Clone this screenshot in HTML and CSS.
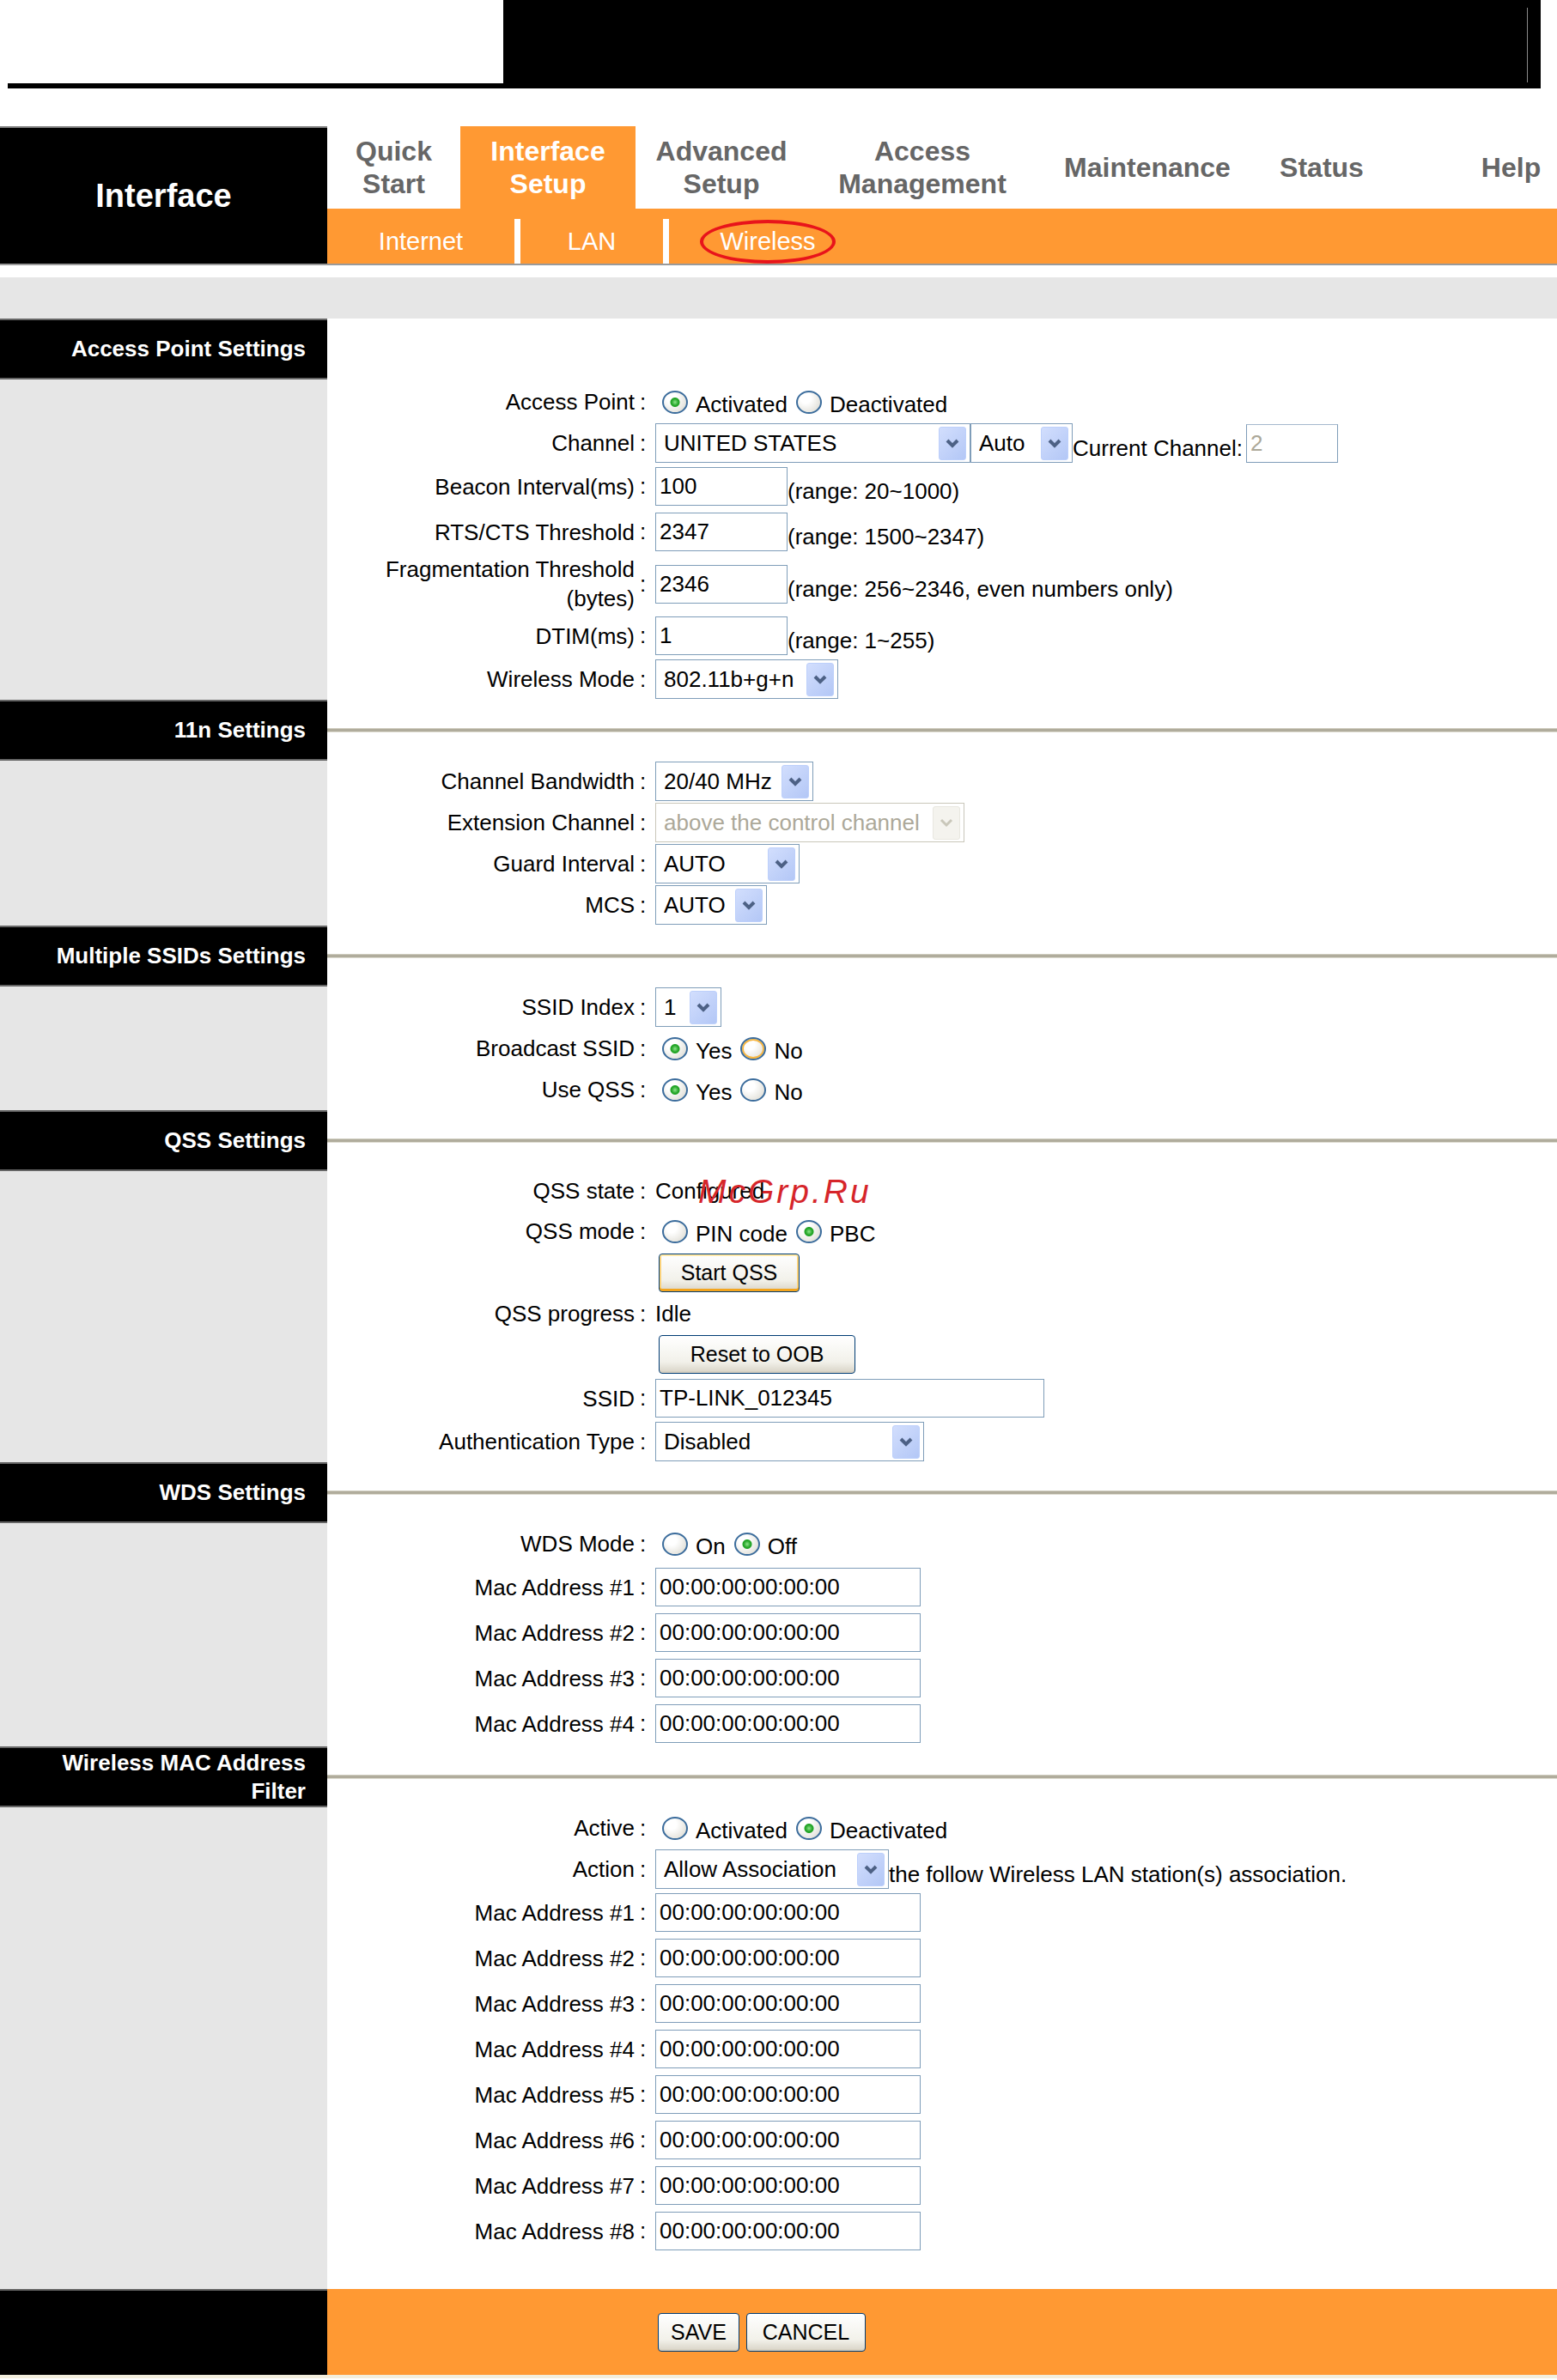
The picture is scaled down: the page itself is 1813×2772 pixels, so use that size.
FILE: index.html
```html
<!DOCTYPE html>
<html lang="en">
<head>
  <meta charset="UTF-8" />
  <title>Interface Setup - Wireless</title>
  <link rel="stylesheet" href="styles.css">
</head>
<body>
  <div class="topbar">
    <div class="topbar-left"></div>
    <div class="topbar-right"><div class="topbar-edge"></div></div>
  </div>

  <div class="nav">
    <div class="nav-title">Interface</div>
    <div class="nav-main">
      <div class="tabs">
        <div class="tab t-quick">Quick<br>Start</div>
        <div class="tab t-iface active">Interface<br>Setup</div>
        <div class="tab t-adv">Advanced<br>Setup</div>
        <div class="tab t-access">Access<br>Management</div>
        <div class="tab t-maint">Maintenance</div>
        <div class="tab t-status">Status</div>
        <div class="tab-fill"></div>
        <div class="tab t-help">Help</div>
      </div>
      <div class="subnav">
        <div class="sub s-internet">Internet</div>
        <div class="sub s-lan">LAN</div>
        <div class="sub s-wireless"><span class="circled">Wireless</span></div>
      </div>
    </div>
  </div>

  <div class="band"></div>

  <!-- Access Point Settings -->
  <div class="sec-head">
    <div class="sec-title">Access Point Settings</div>
    <div class="sec-rule none"></div>
  </div>
  <div class="sec-body">
    <div class="side"></div>
    <div class="fields first">
      <div class="row r-radio">
        <div class="label">Access Point</div><div class="colon">:</div>
        <div class="value">
          <input type="radio" name="ap" checked><span class="opt">Activated</span>
          <input type="radio" name="ap"><span class="opt">Deactivated</span>
        </div>
      </div>
      <div class="row">
        <div class="label">Channel</div><div class="colon">:</div>
        <div class="value">
          <div class="select w367"><span>UNITED STATES</span><i class="arrow"><svg width="16" height="11" viewBox="0 0 16 11"><polyline points="2,2 8,8 14,2" fill="none" stroke="#4d6185" stroke-width="4"/></svg></i></div>
          <div class="select w119"><span>Auto</span><i class="arrow"><svg width="16" height="11" viewBox="0 0 16 11"><polyline points="2,2 8,8 14,2" fill="none" stroke="#4d6185" stroke-width="4"/></svg></i></div>
          <span class="hint">Current Channel:</span>
          <input class="text w107 off" type="text" value="2" disabled>
        </div>
      </div>
      <div class="row">
        <div class="label">Beacon Interval(ms)</div><div class="colon">:</div>
        <div class="value"><input class="text w154" type="text" value="100"><span class="hint">(range: 20~1000)</span></div>
      </div>
      <div class="row">
        <div class="label">RTS/CTS Threshold</div><div class="colon">:</div>
        <div class="value"><input class="text w154" type="text" value="2347"><span class="hint">(range: 1500~2347)</span></div>
      </div>
      <div class="row">
        <div class="label">Fragmentation Threshold (bytes)</div><div class="colon">:</div>
        <div class="value"><input class="text w154" type="text" value="2346"><span class="hint">(range: 256~2346, even numbers only)</span></div>
      </div>
      <div class="row">
        <div class="label">DTIM(ms)</div><div class="colon">:</div>
        <div class="value"><input class="text w154" type="text" value="1"><span class="hint">(range: 1~255)</span></div>
      </div>
      <div class="row">
        <div class="label">Wireless Mode</div><div class="colon">:</div>
        <div class="value">
          <div class="select w213"><span>802.11b+g+n</span><i class="arrow"><svg width="16" height="11" viewBox="0 0 16 11"><polyline points="2,2 8,8 14,2" fill="none" stroke="#4d6185" stroke-width="4"/></svg></i></div>
        </div>
      </div>
    </div>
  </div>

  <!-- 11n Settings -->
  <div class="sec-head">
    <div class="sec-title">11n Settings</div>
    <div class="sec-rule"><div class="rule"></div></div>
  </div>
  <div class="sec-body">
    <div class="side"></div>
    <div class="fields">
      <div class="row">
        <div class="label">Channel Bandwidth</div><div class="colon">:</div>
        <div class="value"><div class="select w184"><span>20/40 MHz</span><i class="arrow"><svg width="16" height="11" viewBox="0 0 16 11"><polyline points="2,2 8,8 14,2" fill="none" stroke="#4d6185" stroke-width="4"/></svg></i></div></div>
      </div>
      <div class="row">
        <div class="label">Extension Channel</div><div class="colon">:</div>
        <div class="value"><div class="select w360 disabled"><span>above the control channel</span><i class="arrow"><svg width="16" height="11" viewBox="0 0 16 11"><polyline points="2,2 8,8 14,2" fill="none" stroke="#c9c7ba" stroke-width="3"/></svg></i></div></div>
      </div>
      <div class="row">
        <div class="label">Guard Interval</div><div class="colon">:</div>
        <div class="value"><div class="select w168"><span>AUTO</span><i class="arrow"><svg width="16" height="11" viewBox="0 0 16 11"><polyline points="2,2 8,8 14,2" fill="none" stroke="#4d6185" stroke-width="4"/></svg></i></div></div>
      </div>
      <div class="row">
        <div class="label">MCS</div><div class="colon">:</div>
        <div class="value"><div class="select w130"><span>AUTO</span><i class="arrow"><svg width="16" height="11" viewBox="0 0 16 11"><polyline points="2,2 8,8 14,2" fill="none" stroke="#4d6185" stroke-width="4"/></svg></i></div></div>
      </div>
    </div>
  </div>

  <!-- Multiple SSIDs Settings -->
  <div class="sec-head">
    <div class="sec-title">Multiple SSIDs Settings</div>
    <div class="sec-rule"><div class="rule"></div></div>
  </div>
  <div class="sec-body">
    <div class="side"></div>
    <div class="fields">
      <div class="row">
        <div class="label">SSID Index</div><div class="colon">:</div>
        <div class="value"><div class="select w77"><span>1</span><i class="arrow"><svg width="16" height="11" viewBox="0 0 16 11"><polyline points="2,2 8,8 14,2" fill="none" stroke="#4d6185" stroke-width="4"/></svg></i></div></div>
      </div>
      <div class="row r-radio">
        <div class="label">Broadcast SSID</div><div class="colon">:</div>
        <div class="value">
          <input type="radio" name="bc" checked><span class="opt">Yes</span>
          <input type="radio" name="bc" class="hot"><span class="opt">No</span>
        </div>
      </div>
      <div class="row r-radio">
        <div class="label">Use QSS</div><div class="colon">:</div>
        <div class="value">
          <input type="radio" name="uq" checked><span class="opt">Yes</span>
          <input type="radio" name="uq"><span class="opt">No</span>
        </div>
      </div>
    </div>
  </div>

  <!-- QSS Settings -->
  <div class="sec-head">
    <div class="sec-title">QSS Settings</div>
    <div class="sec-rule"><div class="rule"></div></div>
  </div>
  <div class="sec-body">
    <div class="side"></div>
    <div class="fields">
      <div class="row r-text">
        <div class="label">QSS state</div><div class="colon">:</div>
        <div class="value mark-host">Configured<span class="watermark">McGrp.Ru</span></div>
      </div>
      <div class="row r-radio">
        <div class="label">QSS mode</div><div class="colon">:</div>
        <div class="value">
          <input type="radio" name="qm"><span class="opt">PIN code</span>
          <input type="radio" name="qm" checked><span class="opt">PBC</span>
        </div>
      </div>
      <div class="row">
        <div class="label"></div><div class="colon"></div>
        <div class="value"><button class="btn w164 focus">Start QSS</button></div>
      </div>
      <div class="row r-text">
        <div class="label">QSS progress</div><div class="colon">:</div>
        <div class="value">Idle</div>
      </div>
      <div class="row">
        <div class="label"></div><div class="colon"></div>
        <div class="value"><button class="btn w229">Reset to OOB</button></div>
      </div>
      <div class="row">
        <div class="label">SSID</div><div class="colon">:</div>
        <div class="value"><input class="text w453" type="text" value="TP-LINK_012345"></div>
      </div>
      <div class="row">
        <div class="label">Authentication Type</div><div class="colon">:</div>
        <div class="value"><div class="select w313"><span>Disabled</span><i class="arrow"><svg width="16" height="11" viewBox="0 0 16 11"><polyline points="2,2 8,8 14,2" fill="none" stroke="#4d6185" stroke-width="4"/></svg></i></div></div>
      </div>
    </div>
  </div>

  <!-- WDS Settings -->
  <div class="sec-head">
    <div class="sec-title">WDS Settings</div>
    <div class="sec-rule"><div class="rule"></div></div>
  </div>
  <div class="sec-body">
    <div class="side"></div>
    <div class="fields">
      <div class="row r-radio">
        <div class="label">WDS Mode</div><div class="colon">:</div>
        <div class="value">
          <input type="radio" name="wds"><span class="opt">On</span>
          <input type="radio" name="wds" checked><span class="opt">Off</span>
        </div>
      </div>
      <div class="row"><div class="label">Mac Address #1</div><div class="colon">:</div><div class="value"><input class="text w309" type="text" value="00:00:00:00:00:00"></div></div>
      <div class="row"><div class="label">Mac Address #2</div><div class="colon">:</div><div class="value"><input class="text w309" type="text" value="00:00:00:00:00:00"></div></div>
      <div class="row"><div class="label">Mac Address #3</div><div class="colon">:</div><div class="value"><input class="text w309" type="text" value="00:00:00:00:00:00"></div></div>
      <div class="row"><div class="label">Mac Address #4</div><div class="colon">:</div><div class="value"><input class="text w309" type="text" value="00:00:00:00:00:00"></div></div>
    </div>
  </div>

  <!-- Wireless MAC Address Filter -->
  <div class="sec-head">
    <div class="sec-title">Wireless MAC Address Filter</div>
    <div class="sec-rule"><div class="rule"></div></div>
  </div>
  <div class="sec-body">
    <div class="side"></div>
    <div class="fields last">
      <div class="row r-radio">
        <div class="label">Active</div><div class="colon">:</div>
        <div class="value">
          <input type="radio" name="mf"><span class="opt">Activated</span>
          <input type="radio" name="mf" checked><span class="opt">Deactivated</span>
        </div>
      </div>
      <div class="row">
        <div class="label">Action</div><div class="colon">:</div>
        <div class="value">
          <div class="select w272"><span>Allow Association</span><i class="arrow"><svg width="16" height="11" viewBox="0 0 16 11"><polyline points="2,2 8,8 14,2" fill="none" stroke="#4d6185" stroke-width="4"/></svg></i></div>
          <span class="hint">the follow Wireless LAN station(s) association.</span>
        </div>
      </div>
      <div class="row"><div class="label">Mac Address #1</div><div class="colon">:</div><div class="value"><input class="text w309" type="text" value="00:00:00:00:00:00"></div></div>
      <div class="row"><div class="label">Mac Address #2</div><div class="colon">:</div><div class="value"><input class="text w309" type="text" value="00:00:00:00:00:00"></div></div>
      <div class="row"><div class="label">Mac Address #3</div><div class="colon">:</div><div class="value"><input class="text w309" type="text" value="00:00:00:00:00:00"></div></div>
      <div class="row"><div class="label">Mac Address #4</div><div class="colon">:</div><div class="value"><input class="text w309" type="text" value="00:00:00:00:00:00"></div></div>
      <div class="row"><div class="label">Mac Address #5</div><div class="colon">:</div><div class="value"><input class="text w309" type="text" value="00:00:00:00:00:00"></div></div>
      <div class="row"><div class="label">Mac Address #6</div><div class="colon">:</div><div class="value"><input class="text w309" type="text" value="00:00:00:00:00:00"></div></div>
      <div class="row"><div class="label">Mac Address #7</div><div class="colon">:</div><div class="value"><input class="text w309" type="text" value="00:00:00:00:00:00"></div></div>
      <div class="row"><div class="label">Mac Address #8</div><div class="colon">:</div><div class="value"><input class="text w309" type="text" value="00:00:00:00:00:00"></div></div>
    </div>
  </div>

  <div class="footer">
    <div class="footer-side"></div>
    <div class="footer-main">
      <button class="btn w95">SAVE</button>
      <button class="btn w139">CANCEL</button>
    </div>
  </div>
  <div class="footer-edge"></div>
</body>
</html>
```

FILE: styles.css
```css
body {
  margin: 0;
  width: 1813px;
  background: #fff;
  color: #000;
  font-family: "Liberation Sans", Arial, sans-serif;
  font-size: 26px;
}

/* top strip */
.topbar {
  display: flex;
  height: 103px;
}

.topbar-left {
  width: 577px;
  margin-left: 9px;
  border-bottom: 6px solid #000;
  box-sizing: border-box;
}

.topbar-right {
  width: 1208px;
  background: #000;
  padding: 9px 15px 7px 0;
  box-sizing: border-box;
}

.topbar-edge {
  height: 100%;
  border-right: 1px solid #8a8a8a;
}

/* main menu */
.nav {
  display: flex;
  margin-top: 44px;
  border-bottom: 2px solid #9a9a9a;
}

.nav-title {
  width: 381px;
  box-sizing: border-box;
  background: #000;
  color: #fff;
  font-weight: bold;
  font-size: 38px;
  display: flex;
  align-items: center;
  justify-content: center;
  border-top: 2px solid #808080;
}

.nav-main {
  flex: 1;
  display: flex;
  flex-direction: column;
}

.tabs {
  height: 96px;
  display: flex;
}

.tab {
  display: flex;
  align-items: center;
  justify-content: center;
  text-align: center;
  font-weight: bold;
  font-size: 32px;
  line-height: 38px;
  color: #666;
}

.tab.active {
  background: #ff9933;
  color: #fff;
}

.t-quick { width: 155px; }
.t-iface { width: 204px; }
.t-adv { width: 200px; }
.t-access { width: 268px; }
.t-maint { width: 256px; }
.t-status { width: 150px; }
.tab-fill { flex: 1; }
.t-help { width: 107px; }

.subnav {
  height: 64px;
  background: #ff9933;
  display: flex;
  align-items: flex-end;
}

.sub {
  height: 52px;
  display: flex;
  align-items: center;
  justify-content: center;
  color: #fff;
  font-size: 29px;
  box-sizing: border-box;
}

.s-internet { width: 218px; }
.s-lan { width: 173px; border-left: 7px solid #fff; }
.s-wireless { width: 237px; border-left: 7px solid #fff; }

.circled {
  position: relative;
  line-height: 33px;
}

.circled::after {
  content: "";
  position: absolute;
  left: -23px;
  right: -23px;
  top: -9px;
  bottom: -9px;
  border: 4px solid #e8141b;
  border-radius: 50%;
}

.band {
  height: 48px;
  margin-top: 14px;
  background: #e6e6e6;
}

/* sections */
.sec-head {
  display: flex;
  height: 71px;
}

.sec-title {
  width: 381px;
  box-sizing: border-box;
  background: #000;
  color: #fff;
  font-weight: bold;
  font-size: 26px;
  line-height: 33px;
  text-align: right;
  padding: 0 25px 0 20px;
  display: flex;
  align-items: center;
  justify-content: flex-end;
  border-top: 2px solid #666;
  border-bottom: 2px solid #666;
}

.sec-rule {
  flex: 1;
  display: flex;
  align-items: center;
}

.rule {
  flex: 1;
  height: 3px;
  background: #b0ac9c;
  border-top: 1px solid #cfccbf;
  border-bottom: 1px solid #dddbd0;
}

.sec-body {
  display: flex;
}

.side {
  width: 381px;
  background: #e6e6e6;
}

.fields {
  flex: 1;
  padding-left: 59px;
}

.fields.first { padding-top: 2px; }
.fields.last { padding-bottom: 41px; }

.row {
  display: grid;
  grid-template-columns: 299px 24px 1fr;
  align-items: center;
}

.row.r-radio { height: 48px; }
.row.r-text { height: 46px; }

.label {
  text-align: right;
  line-height: 34px;
}

.colon {
  padding-left: 6px;
}

.value {
  display: flex;
  align-items: center;
  white-space: nowrap;
}

.hint {
  margin-top: 12px;
}

/* text boxes */
.text {
  height: 45px;
  box-sizing: border-box;
  margin: 4px 0;
  padding: 0 4px;
  border: 1px solid #7f9db9;
  font: inherit;
  color: #000;
  background: #fff;
}

.text.off {
  margin: 0 0 0 4px;
  color: #aca899;
  border-top-color: #a5b9cd;
}

.w107 { width: 107px; }
.w154 { width: 154px; }
.w309 { width: 309px; }
.w453 { width: 453px; }

/* drop downs */
.select {
  display: flex;
  align-items: center;
  height: 46px;
  margin: 1px 0;
  box-sizing: border-box;
  border: 1px solid #7f9db9;
  background: #fff;
  padding: 0 4px 0 9px;
}

.select span {
  flex: 1;
  overflow: hidden;
}

.arrow {
  width: 32px;
  height: 39px;
  box-sizing: border-box;
  border: 1px solid #bdd0fb;
  border-radius: 3px;
  background: linear-gradient(135deg, #d2defd, #b3c7f6);
  display: flex;
  align-items: center;
  justify-content: center;
}

.select.disabled {
  border-color: #c9c7ba;
  color: #aca899;
}

.select.disabled .arrow {
  border-color: #e8e7e0;
  background: #f4f3ee;
}

.w77 { width: 77px; }
.w119 { width: 119px; }
.w130 { width: 130px; }
.w168 { width: 168px; }
.w184 { width: 184px; }
.w213 { width: 213px; }
.w272 { width: 272px; }
.w313 { width: 313px; }
.w360 { width: 360px; }
.w367 { width: 367px; }

/* radio buttons */
input[type="radio"] {
  appearance: none;
  -webkit-appearance: none;
  width: 30px;
  height: 27px;
  margin: 0 9px 0 8px;
  border: 2px solid #3b6c9c;
  border-radius: 50%;
  box-sizing: border-box;
  background: radial-gradient(circle at 35% 30%, #ffffff 25%, #d8d6cc 100%);
}

input[type="radio"]:checked {
  background:
    radial-gradient(circle, #8ee58a 0, #24a528 4px, #24a528 5px, rgba(36,165,40,0) 6px),
    radial-gradient(circle at 35% 30%, #ffffff 25%, #d8d6cc 100%);
}

input[type="radio"].hot {
  box-shadow: inset 0 0 0 2px #f7b640;
}

.opt {
  margin-top: 6px;
  margin-right: 2px;
}

/* buttons */
.btn {
  height: 45px;
  margin: 2px 0 2px 4px;
  padding: 0;
  border: 1px solid #003c74;
  border-radius: 4px;
  background: linear-gradient(#ffffff, #f2f1ea 70%, #d8d3c6);
  box-shadow: inset 0 -2px 0 #d6d0c2;
  font-family: "Liberation Sans", Arial, sans-serif;
  font-size: 25px;
  color: #000;
}

.btn.focus {
  box-shadow: inset 0 2px 0 #ffe8a6, inset 0 -3px 0 #f3a51e, inset 2px 0 0 #fbd27a, inset -2px 0 0 #fbd27a;
}

.w95 { width: 95px; margin-left: 0; }
.w139 { width: 139px; margin-left: 8px; }
.w164 { width: 164px; }
.w229 { width: 229px; }

/* scan watermark */
.mark-host {
  position: relative;
}

.watermark {
  position: absolute;
  left: 50px;
  top: -4px;
  font-size: 39px;
  line-height: 39px;
  font-style: italic;
  letter-spacing: 3px;
  color: #d6252a;
}

/* footer */
.footer {
  display: flex;
  height: 100px;
}

.footer-side {
  width: 381px;
  background: #000;
  border-top: 2px solid #666;
  box-sizing: border-box;
}

.footer-main {
  flex: 1;
  background: #ff9933;
  display: flex;
  align-items: center;
  padding-left: 385px;
}

.footer-edge {
  height: 4px;
  background: #f3eedd;
}
```
